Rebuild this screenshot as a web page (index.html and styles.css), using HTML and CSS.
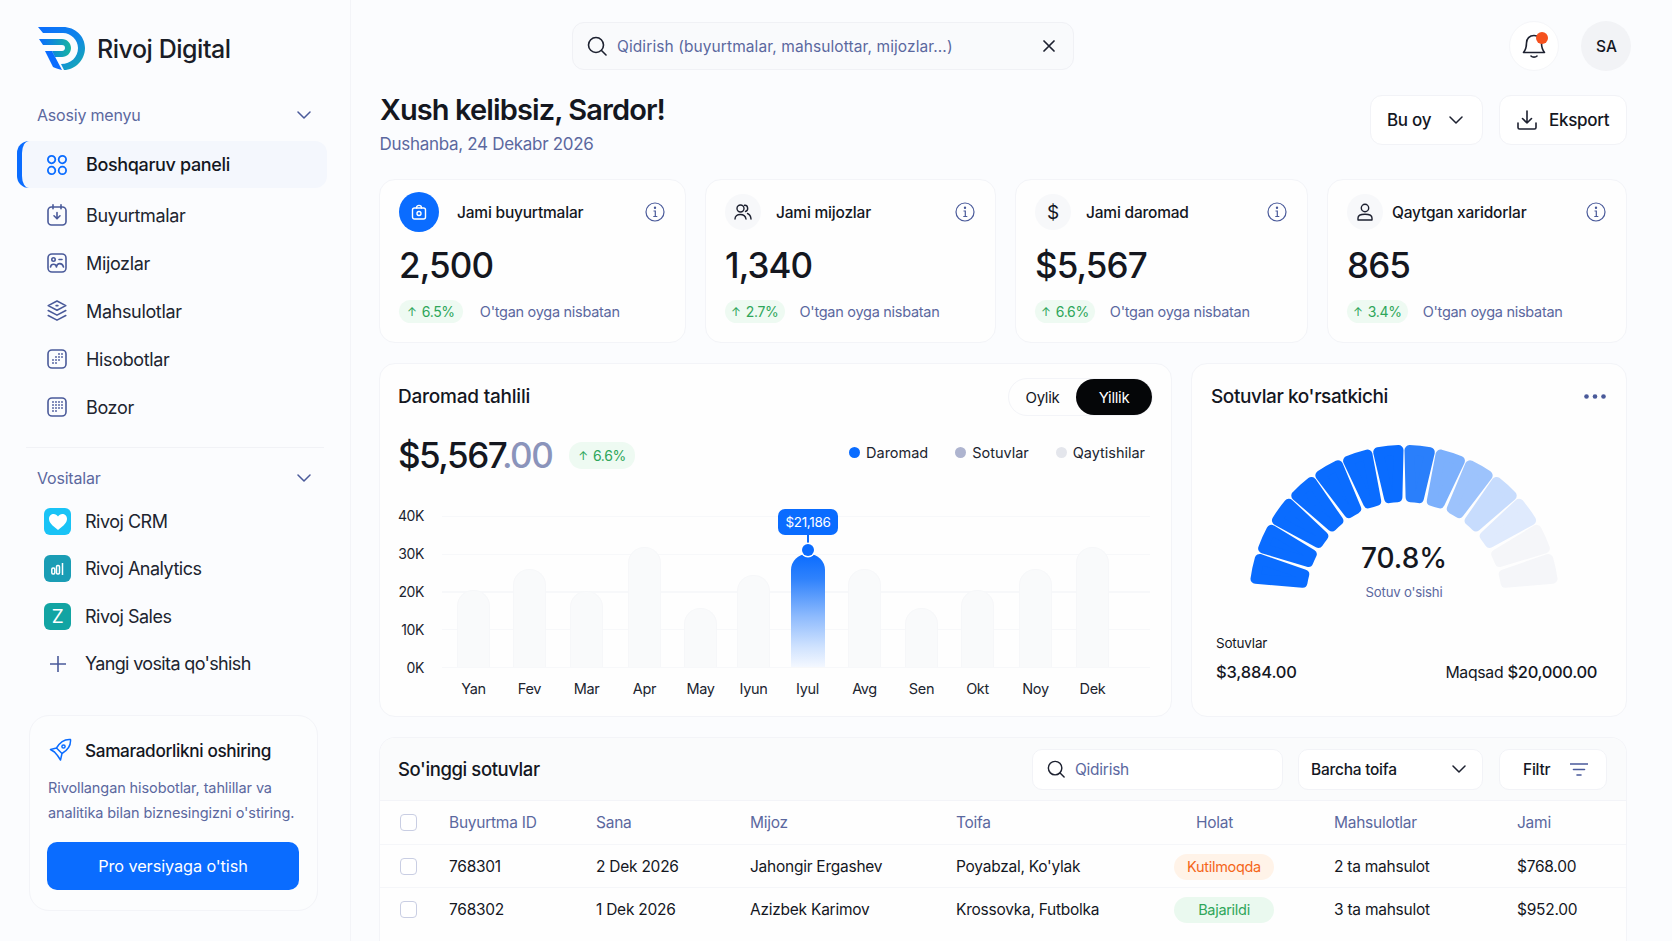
FILE: index.html
```html
<!DOCTYPE html>
<html lang="uz">
<head>
<meta charset="utf-8">
<title>Rivoj Digital</title>
<link rel="stylesheet" href="styles.css">
</head>
<body>
<aside class="sidebar">
  <div class="brand">
    <svg class="brand-mark" viewBox="37 26 49 45" width="49" height="45">
      <defs>
        <linearGradient id="lgA" x1="0" y1="0" x2="1" y2="1"><stop offset="0" stop-color="#0a6cff"/><stop offset=".55" stop-color="#0f86e8"/><stop offset="1" stop-color="#17b0a8"/></linearGradient>
        <linearGradient id="lgB" x1="0" y1="0" x2="1" y2="0"><stop offset="0" stop-color="#0a6cff"/><stop offset="1" stop-color="#16b5a0"/></linearGradient>
      </defs>
      <path fill="url(#lgA)" d="M38 27H63C75 27 85 36 85 48C85 60 75 70 64 70L61 64C71 64 78 57 78 48C78 40 71 33 63 33H43Z"/>
      <path fill="url(#lgB)" d="M39 39H62C67 39 71 43 71 48C71 53 67 57 62 57H55L52 51H62C64 51 65 49.5 65 48C65 46 64 45 62 45H43Z"/>
      <path fill="#0a6cff" d="M45 51H52L62 70C58 69 55 68 53 67Z"/>
    </svg>
    <span class="brand-name">Rivoj Digital</span>
  </div>

  <div class="side-label"><span>Asosiy menyu</span>
    <svg class="chev" viewBox="0 0 14 8"><path d="M1 1l6 6 6-6"/></svg></div>
  <nav class="nav">
    <a class="nav-item is-active">
      <svg class="nav-ico ico-blue" viewBox="0 0 20 20"><circle cx="4.600" cy="4.600" r="3.700"/><circle cx="15.400" cy="4.600" r="3.700"/><circle cx="4.600" cy="15.400" r="3.700"/><circle cx="15.400" cy="15.400" r="3.700"/></svg>
      <span>Boshqaruv paneli</span></a>
    <a class="nav-item">
      <svg class="nav-ico nav-ico-tall" viewBox="0 0 20 22"><rect x="1" y="3" width="18" height="18" rx="3.500"/><path d="M6 .8v4M14 .8v4M10 8.500v6M7 11.800l3 3 3-3"/></svg>
      <span>Buyurtmalar</span></a>
    <a class="nav-item">
      <svg class="nav-ico" viewBox="0 0 20 20"><rect x="1" y="1" width="18" height="18" rx="4"/><circle cx="6.500" cy="6.500" r="1.700"/><path d="M3.500 14c.6-3.600 5.400-3.600 6 0M9.500 13.500c.8-3.800 5.800-4 7 .5M12 6.500h3"/></svg>
      <span>Mijozlar</span></a>
    <a class="nav-item">
      <svg class="nav-ico nav-ico-tall" viewBox="0 0 20 22"><path d="M10 1l8.800 4.600L10 10.200 1.200 5.600zM1.200 10.500l8.800 4.600 8.800-4.600M1.200 15.500l8.800 4.600 8.800-4.600"/><path class="dots" d="M9.200 5.600h1.600"/></svg>
      <span>Mahsulotlar</span></a>
    <a class="nav-item">
      <svg class="nav-ico" viewBox="0 0 20 20"><rect x="1" y="1" width="18" height="18" rx="4"/><path class="dots" d="M12 5h.01M15 5h.01M9 8h.01M12 8h.01M15 8h.01M6 11h.01M9 11h.01M12 11h.01M6 14h.01M9 14h.01"/></svg>
      <span>Hisobotlar</span></a>
    <a class="nav-item">
      <svg class="nav-ico" viewBox="0 0 20 20"><rect x="1" y="1" width="18" height="18" rx="4"/><path class="dots" d="M6 5h.01M9 5h.01M12 5h.01M15 5h.01M6 8h.01M9 8h.01M12 8h.01M15 8h.01M6 11h.01M9 11h.01M12 11h.01M15 11h.01M6 14h.01M9 14h.01"/></svg>
      <span>Bozor</span></a>
  </nav>
  <div class="side-div"></div>
  <div class="side-label side-label-2"><span>Vositalar</span>
    <svg class="chev" viewBox="0 0 14 8"><path d="M1 1l6 6 6-6"/></svg></div>
  <div class="tools">
    <a class="tool"><span class="tool-ico t-crm"><svg viewBox="0 0 18 16" width="18" height="16"><path fill="#fff" d="M9 16C3 11.500 0 8.500 0 4.800 0 2 2.200 0 4.700 0 6.400 0 8 .9 9 2.400 10 .9 11.600 0 13.300 0 15.800 0 18 2 18 4.800 18 8.500 15 11.500 9 16Z"/></svg></span><span>Rivoj CRM</span></a>
    <a class="tool"><span class="tool-ico t-ana"><svg viewBox="0 0 14 12" width="14" height="12" fill="none" stroke="#fff" stroke-width="1.500"><rect x=".8" y="5" width="3" height="6" rx="1.200"/><rect x="5.500" y="2.500" width="3" height="8.500" rx="1.200"/><path d="M11.500 0v12"/></svg></span><span>Rivoj Analytics</span></a>
    <a class="tool"><span class="tool-ico t-sal">Z</span><span>Rivoj Sales</span></a>
    <a class="tool"><span class="tool-ico t-add"><svg viewBox="0 0 16 16" width="16" height="16"><path d="M8 0v16M0 8h16"/></svg></span><span>Yangi vosita qo'shish</span></a>
  </div>
  <div class="promo">
    <div class="promo-head">
      <svg class="rocket" viewBox="0 0 24 24" width="24" height="24"><path d="M22.500 1.500c-6-.5-10.500 2.500-14 8.500l5.500 5.500c6-3.500 9-8 8.500-14zM8.500 10l-6 1.500 4 2.500M14 15.500l-1.500 6.500-3-4.500M6.500 14l3 3.500"/><circle cx="15.500" cy="8.500" r="1.600"/></svg>
      <span>Samaradorlikni oshiring</span>
    </div>
    <p class="promo-text">Rivollangan hisobotlar, tahlillar va analitika bilan biznesingizni o'stiring.</p>
    <button class="promo-btn">Pro versiyaga o'tish</button>
  </div>
</aside>

<main class="main">
  <header class="topbar">
    <div class="search">
      <svg class="s-ico" viewBox="0 0 20 20"><circle cx="9" cy="9" r="7.500"/><path d="M14.500 14.500L19 19"/></svg>
      <span class="search-ph">Qidirish (buyurtmalar, mahsulottar, mijozlar...)</span>
      <svg class="x-ico" viewBox="0 0 12 12"><path d="M1 1l10 10M11 1L1 11"/></svg>
    </div>
    <div class="bell">
      <svg viewBox="0 0 26 26" width="26" height="26"><path d="M13 2.500c-4.500 0-7.500 3.300-7.500 7.500 0 5-1 7-3 9.500h21c-2-2.500-3-4.500-3-9.500 0-4.200-3-7.500-7.500-7.500zM10 23c1.500 1.500 4.500 1.500 6 0"/></svg>
      <i class="bell-dot"></i>
    </div>
    <div class="avatar">SA</div>
  </header>

  <section class="page-head">
    <div>
      <h1>Xush kelibsiz, Sardor!</h1>
      <p class="date">Dushanba, 24 Dekabr 2026</p>
    </div>
    <div class="head-actions">
      <button class="btn btn-period">Bu oy <svg class="chev chev-dark" viewBox="0 0 14 8"><path d="M1 1l6 6 6-6"/></svg></button>
      <button class="btn btn-export"><svg class="dl" viewBox="0 0 20 20"><path d="M10 1v12M5.500 8.500L10 13l4.500-4.500M1 13v4.500c0 .8.7 1.500 1.500 1.500h15c.8 0 1.500-.7 1.500-1.500V13"/></svg> Eksport</button>
    </div>
  </section>

  <section class="stats">
    <article class="stat">
      <div class="stat-head">
        <span class="stat-ico stat-ico-main"><svg viewBox="0 0 16 16" width="16" height="16"><rect x="1.500" y="4" width="13" height="11" rx="2"/><path d="M5.500 4c0-3.500 5-3.500 5 0"/><circle cx="8" cy="9.500" r="2"/></svg></span>
        <span class="stat-title">Jami buyurtmalar</span>
        <svg class="info" viewBox="0 0 20 20"><circle cx="10" cy="10" r="9"/><path d="M8.500 9H10.300V14.500M8.300 14.500H12.300"/><circle class="dot" cx="10" cy="5.800" r=".6"/></svg>
      </div>
      <div class="stat-num">2,500</div>
      <div class="stat-foot stat-foot-wide"><span class="pill"><span class="arr">↑</span> 6.5%</span><span class="cmp">O'tgan oyga nisbatan</span></div>
    </article>
    <article class="stat">
      <div class="stat-head">
        <span class="stat-ico"><svg viewBox="0 0 18 16" width="18" height="16"><circle cx="6.500" cy="4.500" r="3.500"/><path d="M1 15c0-6 10-6 11 0M10.500 1.300c3.500-.5 4.500 5 1 6.200M13.500 9.500c2 .8 3.300 2.500 3.500 5.500"/></svg></span>
        <span class="stat-title">Jami mijozlar</span>
        <svg class="info" viewBox="0 0 20 20"><circle cx="10" cy="10" r="9"/><path d="M8.500 9H10.300V14.500M8.300 14.500H12.300"/><circle class="dot" cx="10" cy="5.800" r=".6"/></svg>
      </div>
      <div class="stat-num">1,340</div>
      <div class="stat-foot"><span class="pill pill-sm"><span class="arr">↑</span> 2.7%</span><span class="cmp">O'tgan oyga nisbatan</span></div>
    </article>
    <article class="stat">
      <div class="stat-head">
        <span class="stat-ico stat-ico-dollar">$</span>
        <span class="stat-title">Jami daromad</span>
        <svg class="info" viewBox="0 0 20 20"><circle cx="10" cy="10" r="9"/><path d="M8.500 9H10.300V14.500M8.300 14.500H12.300"/><circle class="dot" cx="10" cy="5.800" r=".6"/></svg>
      </div>
      <div class="stat-num">$5,567</div>
      <div class="stat-foot"><span class="pill pill-sm"><span class="arr">↑</span> 6.6%</span><span class="cmp">O'tgan oyga nisbatan</span></div>
    </article>
    <article class="stat stat-tight">
      <div class="stat-head">
        <span class="stat-ico"><svg viewBox="0 0 18 18" width="18" height="18"><circle cx="9" cy="5" r="3.700"/><path d="M2 17v-2c0-5 14-5 14 0v2z"/></svg></span>
        <span class="stat-title">Qaytgan xaridorlar</span>
        <svg class="info" viewBox="0 0 20 20"><circle cx="10" cy="10" r="9"/><path d="M8.500 9H10.300V14.500M8.300 14.500H12.300"/><circle class="dot" cx="10" cy="5.800" r=".6"/></svg>
      </div>
      <div class="stat-num">865</div>
      <div class="stat-foot"><span class="pill pill-sm"><span class="arr">↑</span> 3.4%</span><span class="cmp">O'tgan oyga nisbatan</span></div>
    </article>
  </section>

  <section class="panels">
    <article class="panel revenue">
      <div class="rev-top">
        <h2>Daromad tahlili</h2>
        <div class="toggle"><span class="tg">Oylik</span><span class="tg tg-on">Yillik</span></div>
      </div>
      <div class="rev-sum">
        <div class="big">$5,567<span class="big-dim">.00</span></div>
        <span class="pill pill-big"><span class="arr">↑</span> 6.6%</span>
        <ul class="legend">
          <li><i class="lg lg-a"></i>Daromad</li>
          <li><i class="lg lg-b"></i>Sotuvlar</li>
          <li><i class="lg lg-c"></i>Qaytishilar</li>
        </ul>
      </div>
      <div class="chart">
        <div class="y-axis"><span>40K</span><span>30K</span><span>20K</span><span>10K</span><span>0K</span></div>
        <div class="plot">
          <div class="bars">
            <div class="bar" style="height:77px"></div>
            <div class="bar" style="height:98px"></div>
            <div class="bar" style="height:76px"></div>
            <div class="bar" style="height:120px"></div>
            <div class="bar" style="height:59px"></div>
            <div class="bar" style="height:92px"></div>
            <div class="bar bar-on" style="height:113px">
              <div class="tip">$21,186</div>
            </div>
            <div class="bar" style="height:98px"></div>
            <div class="bar" style="height:59px"></div>
            <div class="bar" style="height:77px"></div>
            <div class="bar" style="height:98px"></div>
            <div class="bar" style="height:120px"></div>
          </div>
        </div>
        <div class="x-axis">
          <span><b>Yan</b></span><span><b>Fev</b></span><span><b>Mar</b></span><span><b>Apr</b></span><span><b>May</b></span><span><b>Iyun</b></span><span><b>Iyul</b></span><span><b>Avg</b></span><span><b>Sen</b></span><span><b>Okt</b></span><span><b>Noy</b></span><span><b>Dek</b></span>
        </div>
      </div>
    </article>

    <article class="panel gauge-panel">
      <div class="g-top">
        <h2 class="g-title">Sotuvlar ko'rsatkichi</h2>
        <svg class="more" viewBox="0 0 22 5" width="22" height="5"><circle cx="2.500" cy="2.500" r="2.300"/><circle cx="11" cy="2.500" r="2.300"/><circle cx="19.500" cy="2.500" r="2.300"/></svg>
      </div>
      <div class="gauge">
        <svg viewBox="-170 -160 340 180" width="340" height="180">
          <defs><path id="seg" d="M-10.200 -149.650A150 150 0 0 1 10.200 -149.650L4.200 -102.900A103 103 0 0 0 -4.200 -102.900Z"/></defs>
          <use href="#seg" class="seg c1" transform="rotate(-78)"/>
          <use href="#seg" class="seg c1" transform="rotate(-66)"/>
          <use href="#seg" class="seg c1" transform="rotate(-54)"/>
          <use href="#seg" class="seg c1" transform="rotate(-42)"/>
          <use href="#seg" class="seg c1" transform="rotate(-30)"/>
          <use href="#seg" class="seg c1" transform="rotate(-18)"/>
          <use href="#seg" class="seg c1" transform="rotate(-6)"/>
          <use href="#seg" class="seg c2" transform="rotate(6)"/>
          <use href="#seg" class="seg c3" transform="rotate(18)"/>
          <use href="#seg" class="seg c4" transform="rotate(30)"/>
          <use href="#seg" class="seg c5" transform="rotate(42)"/>
          <use href="#seg" class="seg c6" transform="rotate(54)"/>
          <use href="#seg" class="seg c7" transform="rotate(66)"/>
          <use href="#seg" class="seg c7" transform="rotate(78)"/>
        </svg>
        <div class="g-center"><div class="g-val">70.8%</div><div class="g-sub">Sotuv o'sishi</div></div>
      </div>
      <div class="g-foot">
        <div class="g-label">Sotuvlar</div>
        <div class="g-row"><span>$3,884.00</span><span><span class="g-m">Maqsad</span> <span class="g-t">$20,000.00</span></span></div>
      </div>
    </article>
  </section>

  <section class="sales">
    <div class="sales-head">
      <h2>So'inggi sotuvlar</h2>
      <div class="ctl ctl-search">
        <svg class="s-ico" viewBox="0 0 20 20"><circle cx="9" cy="9" r="7.500"/><path d="M14.500 14.500L19 19"/></svg>
        <span class="ctl-ph">Qidirish</span>
      </div>
      <div class="ctl ctl-select"><span>Barcha toifa</span><svg class="chev chev-dark" viewBox="0 0 14 8"><path d="M1 1l6 6 6-6"/></svg></div>
      <div class="ctl ctl-filter"><span>Filtr</span><svg class="fl" viewBox="0 0 18 13"><path d="M0 1h18M3.500 6.500h11M7 12h4"/></svg></div>
    </div>
    <table class="tbl">
      <colgroup><col class="c-a"><col class="c-b"><col class="c-c"><col class="c-d"><col class="c-e"><col class="c-f"><col class="c-g"><col></colgroup>
      <thead>
        <tr><th class="cb"><i class="check"></i></th><th>Buyurtma ID</th><th>Sana</th><th>Mijoz</th><th>Toifa</th><th class="th-holat">Holat</th><th>Mahsulotlar</th><th>Jami</th></tr>
      </thead>
      <tbody>
        <tr><td class="cb"><i class="check"></i></td><td>768301</td><td>2 Dek 2026</td><td>Jahongir Ergashev</td><td>Poyabzal, Ko'ylak</td><td><span class="st st-wait">Kutilmoqda</span></td><td>2 ta mahsulot</td><td>$768.00</td></tr>
        <tr><td class="cb"><i class="check"></i></td><td>768302</td><td>1 Dek 2026</td><td>Azizbek Karimov</td><td>Krossovka, Futbolka</td><td><span class="st st-done">Bajarildi</span></td><td>3 ta mahsulot</td><td>$952.00</td></tr>
      </tbody>
    </table>
  </section>
</main>
</body>
</html>
```

FILE: styles.css
```css
* { box-sizing: border-box; }
html, body { height: 100%; }
body {
  margin: 0;
  display: flex;
  height: 941px;
  overflow: hidden;
  background: #fbfcfe;
  color: #14171f;
  font-family: "Inter", "Liberation Sans", sans-serif;
  font-size: 16px;
}
h1, h2, p, ul { margin: 0; padding: 0; }
button { font-family: inherit; cursor: pointer; }

/* Sidebar */
.sidebar {
  width: 351px;
  flex: none;
  padding-top: 26px;
  border-right: 1px solid #f3f4f8;
}
.brand { display: flex; align-items: center; gap: 11px; margin-left: 37px; height: 45px; }
.brand-name { font-size: 25px; font-weight: 500; letter-spacing: -.47px; color: #1a1d27; }
.side-label {
  display: flex; justify-content: space-between; align-items: center;
  height: 22px; margin-top: 33px; padding: 0 39px 0 37px;
  font-size: 16px; color: #5b689f; letter-spacing: -.2px;
}
.side-label-2 { margin-top: 19px; }
.chev { width: 14px; height: 8px; fill: none; stroke: #4a5a9a; stroke-width: 1.5; stroke-linecap: round; stroke-linejoin: round; }
.chev-dark { stroke: #1d2130; }
.nav { margin: 15px 23px 0 17px; }
.nav-item {
  display: flex; align-items: center; gap: 19px;
  height: 48px; padding-left: 30px;
  font-size: 18px; letter-spacing: -.35px; color: #20242f;
}
.nav-item.is-active {
  height: 47px; margin-bottom: 3px;
  background: #f4f7fd; border-radius: 12px;
  border-left: 5px solid #0a6cff; padding-left: 25px;
  font-weight: 500; color: #14171f;
}
.nav-ico { width: 20px; height: 20px; flex: none; overflow: visible; fill: none; stroke: #4a5a9a; stroke-width: 1.6; stroke-linecap: round; stroke-linejoin: round; }
.nav-ico-tall { height: 22px; }
.ico-blue { stroke: #0a6cff; stroke-width: 1.8; }
.nav-ico .dots { stroke-width: 1.8; }
.side-div { height: 1px; margin: 16px 26px 0 26px; background: #f1f2f6; }
.tools { margin-top: 9px; }
.tool {
  display: flex; align-items: center; gap: 14px;
  height: 47.3px; padding-left: 44px;
  font-size: 18px; letter-spacing: -.5px; color: #20242f;
}
.tool:last-child { letter-spacing: -.65px; }
.tool-ico {
  width: 27px; height: 27px; flex: none; border-radius: 6px;
  display: flex; align-items: center; justify-content: center;
  color: #fff; font-size: 19px;
}
.t-crm { background: #19c3f6; }
.t-ana { background: #1a9db5; }
.t-sal { background: #12a4a3; }
.t-add path { stroke: #4a5a9a; stroke-width: 1.6; fill: none; }
.promo {
  width: 289px; height: 196px; margin: 28px 0 0 29px;
  padding: 19px 19px 0 17px;
  border: 1px solid #f3f4f8; border-radius: 20px;
  background: #fcfdfe;
}
.promo-head { display: flex; align-items: center; gap: 13px; height: 30px; font-size: 17.2px; font-weight: 500; letter-spacing: -.35px; margin-left: 1px; }
.rocket { fill: none; stroke: #0a6cff; stroke-width: 1.5; stroke-linejoin: round; stroke-linecap: round; flex: none; }
.promo-text { margin: 10px 0 0 1px; font-size: 14.5px; line-height: 25px; color: #5b689f; letter-spacing: -.1px; }
.promo-btn {
  width: 252px; height: 48px; margin-top: 17px;
  background: #0a6cff; color: #fff; border: 0; border-radius: 10px;
  font-size: 16.3px; letter-spacing: -.1px;
}

/* Main */
.main { flex: 1; min-width: 0; padding: 21px 45px 0 28px; }
.topbar { display: flex; align-items: center; height: 50px; }
.search {
  display: flex; align-items: center; gap: 10px;
  width: 502px; height: 48px; margin-left: 193px; padding: 0 18px 0 14px;
  background: #f9fafc; border: 1px solid #f0f1f5; border-radius: 12px;
}
.s-ico { width: 20px; height: 20px; flex: none; fill: none; stroke: #1d2130; stroke-width: 1.6; stroke-linecap: round; }
.search-ph { flex: 1; font-size: 15.5px; color: #5b689f; letter-spacing: .09px; white-space: nowrap; }
.x-ico { width: 12px; height: 12px; fill: none; stroke: #1d2130; stroke-width: 1.7; stroke-linecap: round; }
.bell {
  position: relative; display: flex; align-items: center; justify-content: center;
  width: 50px; height: 50px; margin-left: auto; border-radius: 50%;
  background: #fff; border: 1px solid #f5f6f9;
}
.bell svg { fill: none; stroke: #1d2130; stroke-width: 1.6; stroke-linejoin: round; stroke-linecap: round; }
.bell-dot { position: absolute; top: 10px; right: 10px; width: 12px; height: 12px; background: #f5511e; border-radius: 50%; }
.avatar {
  display: flex; align-items: center; justify-content: center;
  width: 50px; height: 50px; margin: 0 -4px 0 22px; padding-left: 1px; border-radius: 50%;
  background: #f2f3f6; font-size: 15.5px; font-weight: 500;
}
.page-head { display: flex; justify-content: space-between; margin: 21px 0 0 1px; height: 64px; }
h1 { font-size: 29px; line-height: 36px; font-weight: 600; letter-spacing: -.9px; }
.date { margin: 4px 0 0 -.5px; font-size: 17px; line-height: 24px; color: #5b689f; letter-spacing: -.3px; }
.head-actions { display: flex; gap: 16px; margin-top: 3px; }
.btn {
  display: flex; align-items: center; height: 50px;
  background: #fff; border: 1px solid #f2f3f7; border-radius: 12px;
  font-size: 17px; font-weight: 500; letter-spacing: -.3px; color: #14171f;
}
.btn-period { width: 113px; padding: 0 19px 0 16px; justify-content: space-between; }
.btn-export { width: 128px; padding: 0 16px 0 17px; gap: 12px; }
.dl { width: 20px; height: 20px; fill: none; stroke: #1d2130; stroke-width: 1.6; stroke-linecap: round; stroke-linejoin: round; flex: none; }

/* Stats */
.stats { display: grid; grid-template-columns: 307px 291px 293px 300px; gap: 19px; margin-top: 23px; }
.stat {
  height: 164px; padding: 12px 20px 0 19px;
  background: #fefefe; border: 1px solid #f3f4f8; border-radius: 16px;
}
.stat-head { display: flex; align-items: center; height: 40px; gap: 15px; }
.stat-tight .stat-head { gap: 9px; }
.stat-ico {
  display: flex; align-items: center; justify-content: center; flex: none;
  width: 36px; height: 36px; border-radius: 50%; background: #f7f8fa;
}
.stat-ico svg { fill: none; stroke: #1d2130; stroke-width: 1.4; stroke-linejoin: round; stroke-linecap: round; }
.stat-ico-main { width: 40px; height: 40px; background: #0a6cff; margin-right: 3px; }
.stat-ico-main svg { stroke: #fff; }
.stat-ico-dollar { font-size: 19px; }
.stat-title { flex: 1; font-size: 15.500px; font-weight: 500; letter-spacing: -.2px; white-space: nowrap; }
.info { width: 20px; height: 20px; flex: none; fill: none; stroke: #4a5a9a; stroke-width: 1.2; }
.info .dot { fill: #4a5a9a; }
.stat-num { margin-top: 11px; font-size: 35px; line-height: 44px; font-weight: 500; letter-spacing: -.9px; }
.stat-foot { display: flex; align-items: center; gap: 15px; margin-top: 13px; }
.stat-foot-wide { gap: 17px; }
.pill {
  display: inline-flex; align-items: center; gap: 5px;
  height: 23px; padding: 0 8px; border-radius: 12px;
  background: #eefaf2; color: #2fa65a; font-size: 14px; letter-spacing: -.3px;
}
.pill-sm { padding: 0 6px; }
.arr { font-size: 12px; }
.cmp { font-size: 14.5px; color: #5b689f; letter-spacing: -.28px; white-space: nowrap; }

/* Panels */
.panels { display: grid; grid-template-columns: 793px 436px; gap: 19px; margin-top: 20px; }
.panel { height: 354px; background: #fefefe; border: 1px solid #f3f4f8; border-radius: 16px; }
.revenue { padding: 14px 18px 0 18px; }
.rev-top { display: flex; justify-content: space-between; align-items: center; height: 38px; }
.rev-top h2 { margin-top: -2px; letter-spacing: -.22px; }
h2 { font-size: 19px; font-weight: 500; letter-spacing: -.45px; }
.toggle {
  display: flex; width: 145px; height: 38px;
  border: 1px solid #f3f4f8; border-radius: 19px; font-size: 15px; letter-spacing: -.3px;
}
.tg { display: flex; align-items: center; justify-content: center; width: 67px; }
.tg-on { width: 76px; background: #050608; color: #fff; border-radius: 18px; }
.rev-sum { display: flex; align-items: center; height: 42px; margin-top: 18px; }
.big { font-size: 35px; font-weight: 500; letter-spacing: -1.5px; white-space: nowrap; }
.big-dim { color: #8b94bb; }
.pill-big { height: 27px; margin-left: 17px; border-radius: 13px; padding: 0 9px; }
.legend { display: flex; list-style: none; margin-left: auto; margin-right: 8px; margin-top: -6px; font-size: 14.5px; letter-spacing: -.02px; color: #20242f; }
.legend li { display: flex; align-items: center; gap: 6px; margin-left: 27px; }
.lg { width: 11px; height: 11px; border-radius: 50%; }
.lg-a { background: #0a6cff; }
.lg-b { background: #aeb4cf; }
.lg-c { background: #e4e6ec; }
.chart { display: grid; grid-template-columns: 44px 708px; grid-template-rows: 152px auto; margin-top: 40px; }
.y-axis {
  display: flex; flex-direction: column; justify-content: space-between; align-items: flex-end;
  width: 26px; height: 168px; margin-top: -8px; font-size: 14px; line-height: 16px; letter-spacing: -.4px; color: #20242f;
}
.plot {
  height: 152px;
  background: repeating-linear-gradient(to bottom, #f7f8fa 0, #f7f8fa 1px, transparent 1px, transparent 37.75px);
  border-bottom: 1px solid #f7f8fa;
}
.bars, .x-axis { display: grid; grid-template-columns: 56px 57px 58px 56px 53px 54px 57px 57px 56px 58px 57px 33px; padding-left: 15px; }
.bars { height: 151px; align-items: end; }
.bar { width: 33px; background: #f9fafb; border: 1px solid #f6f7f9; border-bottom: 0; border-radius: 16px 16px 0 0; }
.bar-on {
  position: relative; width: 34px; border: 0;
  background: linear-gradient(#0a6cff 0, #2f82fc 22%, #8dbafd 55%, #cfe2fe 82%, #f4f8ff 100%);
}
.bar-on::before {
  content: ""; position: absolute; left: 50%; top: -21px; width: 2px; height: 16px; margin-left: -1px; background: #0a6cff;
}
.bar-on::after {
  content: ""; position: absolute; left: 50%; top: -10px; width: 12px; height: 12px; margin-left: -6px;
  background: #0a6cff; border-radius: 50%; box-shadow: 0 0 0 1.500px #fff;
}
.tip {
  position: absolute; left: 50%; top: -45px; transform: translateX(-50%);
  width: 60px; height: 26px; display: flex; align-items: center; justify-content: center;
  background: #0a6cff; color: #fff; border-radius: 7px; font-size: 13.500px; letter-spacing: -.3px;
}
.x-axis { grid-column: 2; margin-top: 12px; font-size: 14.5px; letter-spacing: -.35px; line-height: 18px; color: #20242f; }
.x-axis span { display: flex; justify-content: center; width: 33px; }
.x-axis b { font-weight: 400; white-space: nowrap; }

/* Gauge */
.gauge-panel { padding: 14px 20px 0 19px; }
.g-top { display: flex; justify-content: space-between; align-items: center; height: 36px; }
.g-title { font-size: 19px; font-weight: 500; letter-spacing: -.4px; }
.more { fill: #4a5a9a; }
.gauge { position: relative; width: 340px; height: 180px; margin: 26px 0 0 23px; }
.seg { fill: currentColor; stroke: currentColor; stroke-width: 10; stroke-linejoin: round; }
.c1 { color: #0a6cff; }
.c2 { color: #2a7ffb; }
.c3 { color: #7cb0fc; }
.c4 { color: #9dc3fc; }
.c5 { color: #c7dcfd; }
.c6 { color: #dfeafd; }
.c7 { color: #f5f6f9; }
.g-center { position: absolute; left: 0; right: 0; top: 98px; text-align: center; }
.g-val { font-size: 28px; line-height: 40px; font-weight: 500; letter-spacing: 0; }
.g-sub { margin-top: 4px; font-size: 13.2px; line-height: 20px; color: #5b689f; letter-spacing: -.2px; }
.g-foot { margin: 14px 9px 0 5px; }
.g-label { font-size: 13.5px; line-height: 18px; letter-spacing: -.2px; }
.g-row { display: flex; justify-content: space-between; margin-top: 9px; font-size: 16.5px; line-height: 22px; font-weight: 500; letter-spacing: -.15px; }
.g-m { font-weight: 400; font-size: 15.8px; letter-spacing: -.3px; }
.g-t { letter-spacing: -.35px; }

/* Table */
.sales { margin-top: 20px; height: 204px; background: #fefefe; border: 1px solid #f3f4f8; border-bottom: 0; border-radius: 16px 16px 0 0; overflow: hidden; }
.sales-head {
  display: flex; align-items: center; height: 63px; padding: 0 19px 0 18px;
  background: #fafbfc; border-bottom: 1px solid #f3f4f8;
}
.sales-head h2 { flex: 1; font-size: 18.5px; letter-spacing: -.4px; }
.ctl {
  display: flex; align-items: center; height: 41px;
  background: #fff; border: 1px solid #f2f3f7; border-radius: 10px; font-size: 15.500px; letter-spacing: -.25px;
}
.ctl-search { width: 251px; padding-left: 14px; gap: 10px; }
.ctl-search .s-ico { width: 18px; height: 18px; }
.ctl-ph { color: #5b689f; }
.ctl-select { width: 185px; margin-left: 15px; padding: 0 16px 0 12px; justify-content: space-between; font-weight: 500; }
.ctl-filter { width: 108px; margin-left: 16px; padding: 0 18px 0 23px; justify-content: space-between; font-weight: 500; }
.fl { width: 18px; height: 13px; fill: none; stroke: #4a5a9a; stroke-width: 1.6; stroke-linecap: round; }
.tbl { width: 100%; table-layout: fixed; border-collapse: collapse; font-size: 15.500px; letter-spacing: -.25px; }
.c-a { width: 69px; }
.c-b { width: 147px; }
.c-c { width: 154px; }
.c-d { width: 206px; }
.c-e { width: 218px; }
.c-f { width: 160px; }
.c-g { width: 183px; }
.tbl th, .tbl td { height: 43px; padding: 0; text-align: left; white-space: nowrap; border-bottom: 1px solid #f5f6f9; }
.tbl td { padding-top: 2px; }
.tbl th { font-weight: 400; color: #5b689f; }
.tbl tbody tr:last-child td { border-bottom: 0; }
.tbl .th-holat { padding-left: 22px; }
.tbl .cb { padding-left: 20px; }
.check { display: block; width: 17px; height: 17px; background: #fff; border: 1.500px solid #c9cee3; border-radius: 4px; }
.st {
  display: inline-flex; align-items: center; justify-content: center;
  width: 100px; height: 26px; border-radius: 13px; font-size: 14.5px; letter-spacing: -.3px;
}
.st-wait { background: #fff3e8; color: #f5661a; }
.st-done { background: #eaf9ef; color: #2fa65a; }
```
